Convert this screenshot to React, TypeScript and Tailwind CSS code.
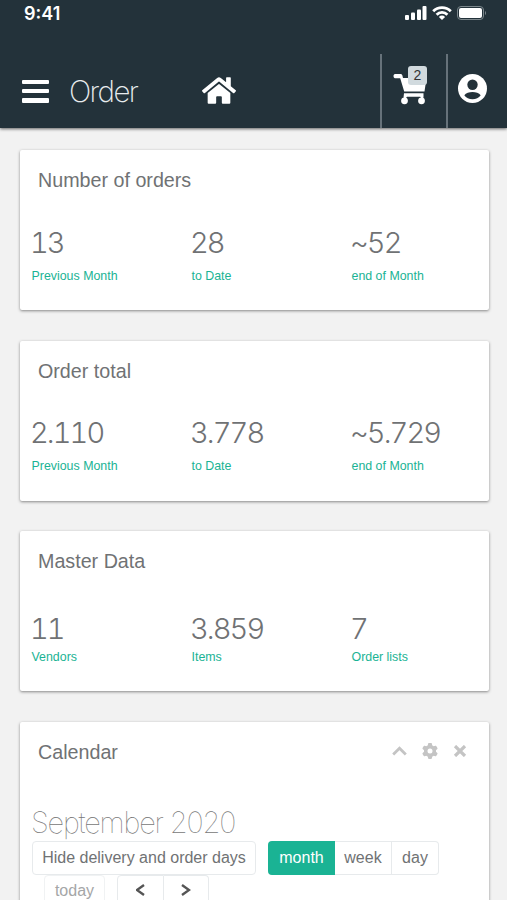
import React from 'react';
import { FaHome } from 'react-icons/fa';
import { FaGear } from 'react-icons/fa6';

interface Stat {
  value: string;
  label: string;
}

interface StatCardProps {
  title: string;
  stats: Stat[];
  valueClass: string;
}

const orderStats: Stat[] = [
  { value: '13', label: 'Previous Month' },
  { value: '28', label: 'to Date' },
  { value: '~52', label: 'end of Month' },
];

const totalStats: Stat[] = [
  { value: '2.110', label: 'Previous Month' },
  { value: '3.778', label: 'to Date' },
  { value: '~5.729', label: 'end of Month' },
];

const masterStats: Stat[] = [
  { value: '11', label: 'Vendors' },
  { value: '3.859', label: 'Items' },
  { value: '7', label: 'Order lists' },
];

const StatusBar = () => (
  <div className="flex h-[26px] items-center justify-between pl-6 pr-[20px]">
    <span className="font-['Inter'] text-[18px] font-semibold leading-[27px]">9:41</span>
    <div className="flex items-center gap-[5px]">
      <svg width="22" height="14" viewBox="0 0 22 14" fill="currentColor">
        <rect x="0" y="9" width="4" height="5" rx="1" />
        <rect x="6" y="6.5" width="4" height="7.5" rx="1" />
        <rect x="12" y="3.5" width="4" height="10.5" rx="1" />
        <rect x="17.5" y="0" width="4" height="14" rx="1" />
      </svg>
      <svg width="20" height="14" viewBox="0 0 20 14" fill="none" stroke="currentColor" strokeWidth="2.8">
        <path d="M1.2 5.2a12.4 12.4 0 0 1 17.6 0" />
        <path d="M4.6 8.7a7.6 7.6 0 0 1 10.8 0" />
        <path d="M10 14 6.9 10.9a4.4 4.4 0 0 1 6.2 0z" fill="currentColor" stroke="none" />
      </svg>
      <svg width="30" height="14" viewBox="0 0 30 14">
        <rect x="0.5" y="0.5" width="26" height="13" rx="3.5" fill="none" stroke="#7b868b" />
        <rect x="2" y="2" width="23" height="10" rx="2" fill="#fff" />
        <path d="M28 5v4c1.4-.6 1.4-3.4 0-4z" fill="#7b868b" />
      </svg>
    </div>
  </div>
);

const CartIcon = () => (
  <svg width="34" height="31" viewBox="0 0 34 31" fill="currentColor">
    <path d="M2 0h5.500c1 0 1.700.6 1.900 1.500L10 4h23.500l-2 13.500H11.200L7.200 4.200H2C0 4.200 0 0 2 0z" />
    <path d="M11 19.200h19.500v4.200l-1.800 1.600-1.500-2.300H14l-1.800 2.300-1.700-1.600z" />
    <circle cx="11.500" cy="26.800" r="3.400" />
    <circle cx="28.500" cy="26.800" r="3.400" />
  </svg>
);

const AccountIcon = () => (
  <svg width="29" height="29" viewBox="0 0 29 29">
    <circle cx="14.500" cy="14.500" r="14.500" fill="#fff" />
    <circle cx="14.500" cy="10.800" r="5.200" fill="#23323a" />
    <path d="M6.300 21.200c1.600-2.200 5-3.200 8.200-3.200s6.600 1 8.200 3.200c-1.800 2.600-4.800 4-8.200 4s-6.400-1.400-8.200-4z" fill="#23323a" />
  </svg>
);

const Header = () => (
  <header className="h-32 bg-[#23323a] text-white shadow-[0_1px_3px_rgba(0,0,0,0.6)]">
    <StatusBar />
    <div className="mt-7 flex h-[74px] items-start">
      <div className="ml-[22px] mt-[26px] flex w-[27px] flex-col gap-[5px]">
        <div className="h-[4px] rounded-[1px] bg-white" />
        <div className="h-[4px] rounded-[1px] bg-white" />
        <div className="h-[5px] rounded-[1px] bg-white" />
      </div>
      <h1 className="ml-5 mt-[19px] w-[133px] font-['Inter'] text-[29.500px] font-[160] leading-9 tracking-[-1.600px] text-[#e8ecee]">Order</h1>
      <FaHome className="mt-[21px] h-[31px] w-[34px]" />
      <div className="ml-auto flex h-full w-[66px] border-l-2 border-[#66727a]">
        <div className="relative ml-[11px] mt-5">
          <CartIcon />
          <span className="absolute -top-[8px] left-[15px] flex h-[19px] w-[19px] items-center justify-center rounded-[3px] bg-[#d1dade] font-['Liberation_Sans'] text-[14px] text-[#333]">2</span>
        </div>
      </div>
      <div className="h-full w-[61px] border-l-2 border-[#66727a]">
        <div className="ml-[10px] mt-[20px]">
          <AccountIcon />
        </div>
      </div>
    </div>
  </header>
);

const cardClass = 'rounded-[2px] bg-white shadow-[0_1px_3px_rgba(0,0,0,0.45)]';

const StatCard = ({ title, stats, valueClass }: StatCardProps) => (
  <section className={`${cardClass} h-40`}>
    <h2 className="px-[18px] pt-4 text-[19.700px] leading-7">{title}</h2>
    <div className={`ml-3 grid grid-cols-[160px_160px_1fr] ${valueClass}`}>
      {stats.map((stat) => (
        <div key={stat.label} className="flex h-full flex-col justify-between">
          <div className="-ml-[2px] font-['Inter'] text-[29px] font-[270] tabular-nums leading-8 tracking-[-1.900px]">{stat.value}</div>
          <div className="-ml-[0.5px] text-[12.400px] leading-4 text-[#1ab394]">{stat.label}</div>
        </div>
      ))}
    </div>
  </section>
);

const Calendar = () => (
  <section className={`${cardClass} h-[240px]`}>
    <div className="flex items-start justify-between pl-[18px] pr-[22px] pt-4">
      <h2 className="text-[19.700px] leading-7">Calendar</h2>
      <div className="flex h-[27px] items-center gap-[15px] text-[#c4c4c4]">
        <svg width="15" height="10" viewBox="0 0 15 10" fill="none" stroke="currentColor" strokeWidth="2.800">
          <path d="M1.200 8.500 7.500 2.200l6.300 6.300" />
        </svg>
        <FaGear className="h-4 w-4" />
        <svg width="14" height="12" viewBox="0 0 14 12" fill="none" stroke="currentColor" strokeWidth="3.200">
          <path d="M2 1l10 10M12 1 2 11" />
        </svg>
      </div>
    </div>
    <div className="ml-3 mt-[39px]">
      <h3 className="-ml-px font-['Inter'] text-[29px] font-thin leading-9 tracking-[-1.200px] text-[#777]">September 2020</h3>
      <div className="flex gap-3 text-[16px] leading-8">
        <button className="h-[34px] w-[224px] rounded-[4px] border border-[#e7eaec]">Hide delivery and order days</button>
        <div className="flex h-[34px]">
          <button className="w-[67px] rounded-l-[4px] bg-[#1ab394] text-white">month</button>
          <button className="w-[57px] border border-l-0 border-[#e7eaec]">week</button>
          <button className="w-[47px] rounded-r-[4px] border border-l-0 border-[#e7eaec]">day</button>
        </div>
      </div>
      <div className="ml-3 flex text-[16px] leading-[30px]">
        <button className="h-[34px] w-[61px] rounded-[4px] border border-[#f0f2f3] pb-1 text-[#a5a6a7]">today</button>
        <button className="ml-3 flex h-[34px] w-[47px] items-center justify-center rounded-l-[4px] border border-[#e7eaec] pb-1">
          <svg width="10" height="12" viewBox="0 0 10 12" fill="none" stroke="#555" strokeWidth="2.400"><path d="M8 1 1 6l7 5" /></svg>
        </button>
        <button className="flex h-[34px] w-[45px] items-center justify-center rounded-r-[4px] border border-l-0 border-[#e7eaec] pb-1">
          <svg width="10" height="12" viewBox="0 0 10 12" fill="none" stroke="#555" strokeWidth="2.400"><path d="M1 1l7 5-7 5" /></svg>
        </button>
      </div>
    </div>
  </section>
);

export const App = () => {
  return (
    <div className="h-[900px] w-[507px] overflow-hidden bg-[#f2f2f2] font-['Liberation_Sans',sans-serif] text-[#707274]">
      <Header />
      <main className="flex flex-col gap-[30.500px] pl-[20px] pr-[18px] pt-[22px]">
        <StatCard title="Number of orders" stats={orderStats} valueClass="mt-[33px] h-[57px]" />
        <StatCard title="Order total" stats={totalStats} valueClass="mt-[32px] h-[57px]" />
        <StatCard title="Master Data" stats={masterStats} valueClass="mt-[38px] h-[52px]" />
        <Calendar />
      </main>
    </div>
  );
};

export default App;
